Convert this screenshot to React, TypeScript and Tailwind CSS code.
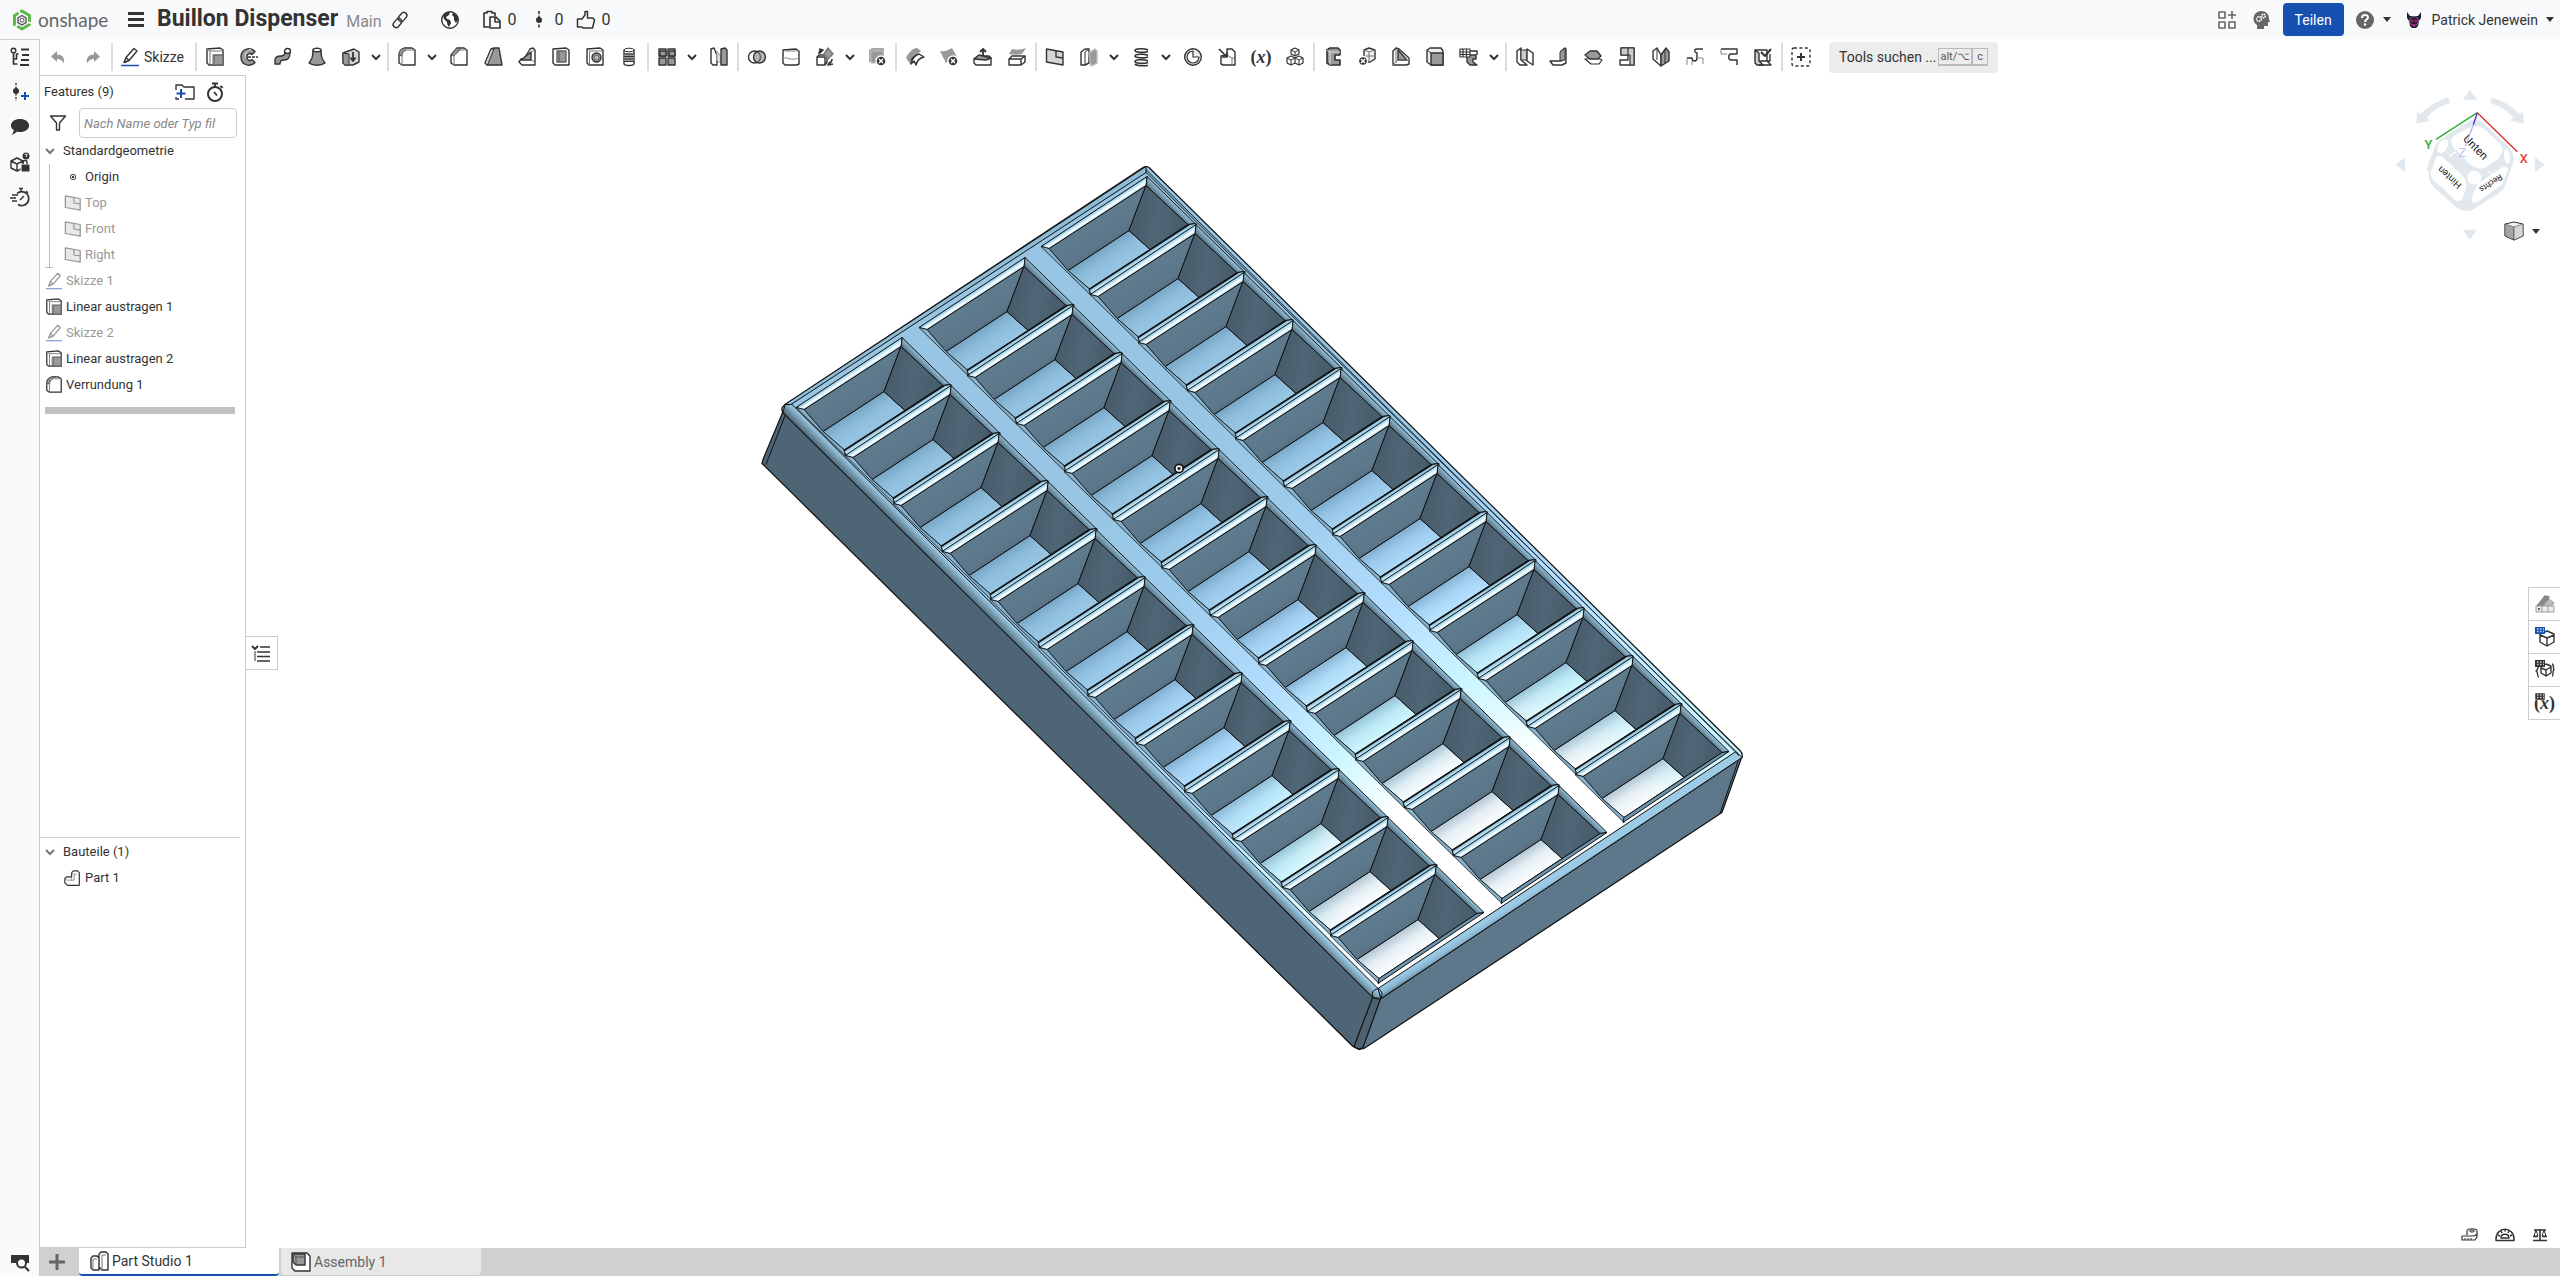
import React, { useState } from "react";

const K = "#333333";
const G = "#999999";
const L = "#d4d4d4";

const icons: Record<string, React.ReactNode> = {
  undo: (
    <path d="M9 4v3.500c5 0 8 3 7 9-1.500-3-3.500-4.500-7-4.500V15L3 9.500z" fill={G} stroke="none" />
  ),
  redo: (
    <path d="M11 4v3.500c-5 0-8 3-7 9 1.500-3 3.500-4.500 7-4.500V15l6-5.500z" fill={G} stroke="none" />
  ),
  sketch: (
    <>
      <path d="M4 15.500l2-5L14 1.500l3 2.500-8 9.500z" fill="#fff" />
      <path d="M6 10.500l3 3M4 15.500l2-1" />
      <path d="M1 18.500h18" stroke="#1651b0" strokeWidth="1.500" />
    </>
  ),
  extrude: (
    <>
      <path d="M2 2l13-1 3 2v15H4l-2-2z" fill="#fff" />
      <path d="M5 18V4h13M2 2l3 2M8 18V7" stroke="#777" strokeWidth="1" />
      <path d="M9 8h9v10H9z" fill={G} stroke="#666" />
    </>
  ),
  revolve: (
    <>
      <path d="M16 4.500C12 0 2 1 2 10s10 10 14 5.500l-3-3c-2 2-5 1-5-2.500s3-4.500 5-2.500z" fill={G} />
      <path d="M12 2.500c-3 0-6 3-6 8" stroke="#ddd" strokeWidth="1" />
      <path d="M9 10h10" strokeDasharray="3 1" />
    </>
  ),
  sweep: (
    <>
      <path d="M2 17v-4c0-3 3-4 6-4 3 0 4-1 4-4l5 0c0 5-1 8-6 8-3 0-4 1-4 4z" fill={G} />
      <ellipse cx="14.500" cy="4" rx="3" ry="2.500" fill="#fff" />
    </>
  ),
  loft: (
    <>
      <path d="M6 3c0 7-1 9-4 13 4 3 12 3 16 0-3-4-4-6-4-13z" fill={G} />
      <ellipse cx="10" cy="3" rx="4" ry="1.800" fill="#fff" />
    </>
  ),
  thicken: (
    <>
      <path d="M2 6l11-4 5 3v10l-6 3H4l-2-2z" fill={L} />
      <path d="M2 6l6 1v11H4l-2-2z" fill={G} strokeWidth="1" />
      <path d="M12 5v8M9.500 10.500L12 14l2.500-3.500" strokeWidth="1.800" />
    </>
  ),
  fillet: (
    <>
      <path d="M2 16V8c0-4 2-6 6-7h7l3 2v15H5z" fill="#fff" />
      <path d="M2 8c0-4 2-6 6-7h4C7 2 5 5 5 9z" fill={G} stroke="#555" strokeWidth="1" />
      <path d="M5 18V9c0-4 3-6 7-6h6" stroke="#777" strokeWidth="1" />
    </>
  ),
  chamfer: (
    <>
      <path d="M2 16V8l6-7h7l3 2v15H5z" fill="#fff" />
      <path d="M2 8l6-7 3 1-6 7z" fill={G} stroke="#555" strokeWidth="1" />
      <path d="M5 18V9l6-6h7" stroke="#777" strokeWidth="1" />
    </>
  ),
  draft: (
    <>
      <path d="M2 16L8 2l3-1h5l3 17H4z" fill={G} />
      <path d="M2 16L8 2l3 0L4.500 18z" fill="#ccc" strokeWidth="1" />
    </>
  ),
  rib: (
    <>
      <path d="M13 2l3-1 2 2v15H5l-3-3 2-3h3z" fill="#fff" />
      <path d="M4 13L14 5v8z" fill={G} />
      <path d="M14 5l4-2M14 13l4 2" stroke="#777" strokeWidth="1" />
    </>
  ),
  shell: (
    <>
      <path d="M2 2l13-1 3 2v15H4l-2-2z" fill="#fff" />
      <path d="M6 4h9v11H6z" fill={G} stroke="#666" />
      <path d="M8 4v11" stroke="#555" strokeWidth="1" />
    </>
  ),
  hole: (
    <>
      <path d="M2 2l13-1 3 2v15H4l-2-2z" fill="#fff" />
      <path d="M4.500 18V4H18" stroke="#777" strokeWidth="1" />
      <circle cx="11.500" cy="10.500" r="4.500" fill={G} />
      <circle cx="11.500" cy="10.500" r="2.500" stroke="#666" strokeWidth="1" fill="#bbb" />
    </>
  ),
  thread: (
    <>
      <path d="M5 3v14c1 2 9 2 10 0V3z" fill="#fff" />
      <path d="M4.500 6h11v8h-11z" fill={G} stroke="none" />
      <path d="M4.500 7h11M4.500 9.500h11M4.500 12h11M4.500 14.500h11" strokeWidth="1" />
      <ellipse cx="10" cy="3" rx="5" ry="1.800" fill="#fff" strokeWidth="1" />
    </>
  ),
  pattern: (
    <>
      <path d="M2 2h7v7H2zM11 2h7v7h-7z" fill="#ddd" />
      <path d="M2 11h7v7H2zM11 11h7v7h-7zM3 4h6v5H3zM12 4h6v5h-6z" fill={G} />
    </>
  ),
  mirror: (
    <>
      <path d="M2 2l3-1 3 7v10H4l-2-2z" fill="#fff" />
      <path d="M8 4l4 6v7l-4-4z" fill="#ddd" stroke="#aaa" strokeWidth="1" />
      <path d="M12 8V2l4-1 2 2v15h-6z" fill={G} />
    </>
  ),
  boolean: (
    <>
      <circle cx="7.500" cy="10" r="6" fill="#fff" />
      <circle cx="12.500" cy="10" r="6" fill="rgba(130,130,130,.6)" />
    </>
  ),
  split: (
    <>
      <path d="M2 3l13-1 3 2v13l-2 1H4l-2-2z" fill="#fff" />
      <path d="M2 12c5-4 6 4 17-2M4 4h14" stroke="#888" strokeWidth="1" />
    </>
  ),
  transform: (
    <>
      <path d="M2 10h8v8H2zM2 10l2-2h8v7l-2 3" fill="#fff" />
      <path d="M13 1l5 6-5 5-4-5z" fill={G} stroke="#777" />
      <path d="M4 7c0-3 1-4 4-4M4 2l4 1-3 3M17 12c0 3-1 4-4 5M18 17l-5 1 2-3" strokeWidth="1.600" />
    </>
  ),
  delete: (
    <>
      <path d="M2 3l3-2h12v9H5v5H2z" fill="#aaa" stroke="none" />
      <path d="M4 4h12v12H4z" fill={G} stroke="#bbb" strokeWidth="1" />
      <circle cx="14" cy="14" r="5" fill={K} stroke="#fff" />
      <path d="M12 12l4 4m0-4l-4 4" stroke="#fff" strokeWidth="1.500" />
    </>
  ),
  moveFace: (
    <>
      <path d="M1 11C3 6 8 1 12 1l4 3-5 4-6 9z" fill={G} stroke="none" />
      <path d="M6 17C7 12 10 8 14 7l5 3c-5 1-7 4-8 8l-2-4z" fill="#fff" />
      <path d="M6 13l4-4" />
    </>
  ),
  deleteFace: (
    <>
      <path d="M1 4c5 1 8-1 12-3l5 9c-4 1-9 3-11 6z" fill={G} stroke="none" />
      <circle cx="14" cy="14" r="5" fill={K} stroke="#fff" />
      <path d="M12 12l4 4m0-4l-4 4" stroke="#fff" strokeWidth="1.500" />
    </>
  ),
  faceUp: (
    <>
      <path d="M1 12l4-3h11l2 2v7H3l-2-2z" fill="#fff" />
      <path d="M1 12l5-4 12 3-5 2z" fill={G} />
      <path d="M10 9V2M7 5l3-3 3 3" strokeWidth="1.800" />
    </>
  ),
  replaceFace: (
    <>
      <path d="M2 12l3-3h13v6l-4 3H2z" fill="#fff" />
      <path d="M2 12h12v6M14 12l4-3" />
      <path d="M2 7l3-5c4 1 9 1 14-1l-4 6c-4 1-8 1-13 0z" fill={G} stroke="none" />
    </>
  ),
  plane: (
    <>
      <path d="M1.500 2L18 5v13L1.500 15z" fill={L} />
      <path d="M11 4v6l7 1" />
    </>
  ),
  midPlane: (
    <>
      <path d="M2 5l4-3h4v14l-4 2H2z" fill="#fff" />
      <path d="M6 18V5l4-3" strokeWidth="1" />
      <path d="M10 6l6-4 2 2v12l-6 3z" fill={G} stroke="#bbb" />
    </>
  ),
  helix: (
    <path
      d="M17 3C13 1 4 1.500 4 3.500s9 2.500 13 1M17 8.500C13 6.500 4 7 4 9s9 2.500 13 1M17 14c-4-2-13-1.500-13 .500s9 2.500 13 1M17 18.500c-6 .500-12 0-13-1.500"
      strokeWidth="1.600"
    />
  ),
  compositeCurve: (
    <>
      <circle cx="10" cy="10" r="8.300" fill="#eee" />
      <path d="M10 4v6h6a6 6 0 1 1-6-6z" fill="#fff" strokeWidth="1.200" />
    </>
  ),
  derive: (
    <>
      <path d="M4 9v8l2 1h12V5l-3-3h-5v6z" fill="#fff" />
      <path d="M10 8l5 3h3M15 11v7" stroke="#777" strokeWidth="1" />
      <path d="M2 2l8 8M10 5v5H5" strokeWidth="1.700" />
    </>
  ),
  blocks: (
    <>
      <path d="M10 1l4 2v4l-4 2-4-2V3zM6 9l4 2v5l-4 2-4-2v-5zM14 9l4 2v5l-4 2-4-2v-5z" fill="#fff" strokeWidth="1.200" />
      <path d="M6 3l4 2 4-2M10 5v4M2 11l4 2 4-2 4 2 4-2M6 13v5M14 13v5" strokeWidth="1" />
    </>
  ),
  sheetMetal: (
    <>
      <path d="M4 3l3-2h8l2 2v5h-5v5h5v5H7l-3-2z" fill={G} strokeWidth="1.600" />
      <path d="M4 3l3 2v13M7 5h10" stroke="#ddd" strokeWidth="1" />
    </>
  ),
  deletePart: (
    <>
      <path d="M7 3l5-2 6 2v9l-5 3H7z" fill="#eee" />
      <path d="M7 3l5 2v10M12 5l6-2M9 9h9" stroke="#777" strokeWidth="1" />
      <circle cx="6" cy="14" r="4.500" fill={K} stroke="#fff" />
      <path d="M4 12l4 4m0-4l-4 4" stroke="#fff" strokeWidth="1.500" />
    </>
  ),
  flange: (
    <>
      <path d="M2 4l3-3 3 1 10 9v6l-3 1H2z" fill="#fff" />
      <path d="M7 3l9 10H7z" fill={G} />
      <path d="M7 13l-5 5M5 2v14M7 13h11" stroke="#777" strokeWidth="1" />
    </>
  ),
  solid: (
    <>
      <path d="M2 3l3-2h11l2 3v14H6l-4-3z" fill="#eee" />
      <path d="M6 6h12v12H6z" fill={G} />
      <path d="M2 3l4 3" strokeWidth="1" />
    </>
  ),
  table: (
    <>
      <path d="M8 8h9v4h-3v3l4 3h-7l-3-3z" fill={G} />
      <path d="M1 2h10v8H1zM4 2v8M7.500 2v8M1 5h10M1 7.500h10" fill="#fff" strokeWidth="1.200" />
      <path d="M11 4h7v4" />
    </>
  ),
  bend: (
    <>
      <path d="M2 4l4-3v12l6 5H5l-3-3z" fill="#fff" />
      <path d="M6 3h6v10H6z" fill="#ccc" strokeWidth="1" />
      <path d="M12 2l6 4v12l-6-4z" fill="#fff" />
    </>
  ),
  tab: (
    <>
      <path d="M12 4l4-3 1 1v14l-4 2H4l-3-4h11z" fill="#fff" />
      <path d="M11 5l5-4v12l-5 1z" fill={G} strokeWidth="1" />
    </>
  ),
  hem: (
    <>
      <path d="M2 12l6 5h8l3-4-5-2z" fill="#fff" strokeWidth="1.200" />
      <path d="M2 8l5-4h7l4 5-3 3H7z" fill={G} />
    </>
  ),
  joint: (
    <>
      <path d="M4 1h13v17H3v-5h8V8H4z" fill="#fff" />
      <path d="M4 1h7v7H4zM11 1h6v17h-4V8h-2z" fill="#ccc" strokeWidth="1.200" />
    </>
  ),
  corner: (
    <>
      <path d="M2 4l4-3 4 7v11l-8-7z" fill="#fff" />
      <path d="M10 8l5-7 3 4v9l-8 5z" fill={G} />
      <path d="M6 2v11M14 3v13" strokeWidth="1" />
    </>
  ),
  relief: (
    <>
      <path d="M2 11h5c0 4 5 4 5 0V6c-3-1-3-4 0-4h6" />
      <path d="M12 11h6v6M2 11v7M7 14v4" stroke="#888" strokeWidth="1" />
    </>
  ),
  modify: (
    <>
      <path d="M2 2h16v5h-6c-3 0-3 6 0 6h6v5" />
      <path d="M2 2v5h6" stroke="#888" strokeWidth="1" />
    </>
  ),
  finish: (
    <>
      <path d="M2 3l4 3v8l4 4H4l-2-2z" fill="#ccc" />
      <path d="M2 3h12v11l4 4H6M6 14h11V7" fill="none" />
      <path d="M8 5l4 4 6-7" strokeWidth="2" />
    </>
  ),
  addTool: (
    <>
      <rect x="1" y="1" width="18" height="18" rx="2" strokeDasharray="3 2.400" />
      <path d="M10 6v8M6 10h8" strokeWidth="2" />
    </>
  ),
  tree: (
    <>
      <circle cx="3.500" cy="3.500" r="2.300" />
      <path d="M3.500 6v11h4M3.500 12h3V7h2" strokeWidth="1.700" />
      <path d="M11 2.500h8M12 8h7M11 13h8M10 18h9" strokeWidth="2" />
    </>
  ),
  addVersion: (
    <>
      <circle cx="6" cy="9" r="3" fill={K} stroke="none" />
      <path d="M6 1v18" strokeDasharray="2 1.500" />
      <path d="M15 10v8M11 14h8" stroke="#1651b0" strokeWidth="2" />
    </>
  ),
  comment: (
    <path d="M10 2c5 0 9 2.500 9 6.500S15 15 10 15c-1 0-2 0-2.500-.500L2 18l2-5c-2-1-3-2.500-3-4.500C1 4.500 5 2 10 2z" fill={K} stroke="none" />
  ),
  insight: (
    <>
      <path d="M7 6l6 3v7l-6 3-6-3V9zM1 9l6 3 6-3M7 12v7" />
      <circle cx="16" cy="4" r="3.500" fill={K} stroke="none" />
      <path d="M15 3c0-1.500 2-1.500 2 0 0 1-1 1-1 2" stroke="#fff" strokeWidth="1" />
      <rect x="11" y="12" width="9" height="8" fill={K} stroke="#fff" strokeWidth="1" />
      <path d="M13 12v-2c0-2 4-2 4 0v2" />
    </>
  ),
  history: (
    <>
      <path d="M7 6.500A7 7 0 1 1 8 17.500" strokeWidth="1.700" />
      <path d="M9 1.500h4M11 2v3M10 13l4-4M2 8h6M0 11h6M2 14h5M16 4l2 2" />
    </>
  ),
  stopwatch: (
    <>
      <circle cx="10" cy="12" r="7" strokeWidth="2" />
      <path d="M7 1.500h6M10 2v3M15.500 4l2 2M9 10l3 3.500" strokeWidth="1.800" />
    </>
  ),
  addFolder: (
    <>
      <path d="M1 8V3h6l2 2h10v12h-9M1 15v2h3" />
      <path d="M6 7v9M1.500 11.500h9" stroke="#1651b0" strokeWidth="2" />
    </>
  ),
  filter: <path d="M2.500 3h15l-6 7v7h-3v-7z" />,
  part: (
    <>
      <path d="M1 10l2-2h6V3l2-2h5l2 2v15H4l-3-3z" fill="#fff" />
      <path d="M1 10l3 2h8V5h3M9 3l3 2M9 8v4" stroke="#888" strokeWidth="1" />
    </>
  ),
  studio: (
    <>
      <path d="M2 7l2-2h4l2 2v12H4l-2-2zM10 3l2-2h5l2 2v16h-6l-3-3z" fill="#fff" />
      <path d="M4 19V8h4M13 19V4h4" stroke="#777" strokeWidth="1" />
    </>
  ),
  assembly: (
    <>
      <path d="M1 1h15l3 3v15H4l-3-3z" fill="#fff" />
      <path d="M2 2h12v11H5l-3-3z" fill={G} />
      <path d="M2 2l3 3v8M5 5h9" stroke="#555" strokeWidth="1" />
    </>
  ),
  searchTab: (
    <>
      <path d="M1 3h18v8h-2a6 6 0 0 0-11 0H1z" fill={K} stroke="none" />
      <circle cx="11.500" cy="11" r="4.500" fill="#fff" strokeWidth="2" />
      <path d="M15 15l4 4" strokeWidth="2.200" />
    </>
  ),
  origin: (
    <>
      <circle cx="10" cy="10" r="3" strokeWidth="1" />
      <circle cx="10" cy="10" r="1.300" fill={K} stroke="none" />
    </>
  ),
  link: (
    <g transform="rotate(-50 10 10)" strokeWidth="1.400">
      <rect x="1" y="7" width="10" height="6" rx="3" />
      <rect x="9" y="7" width="10" height="6" rx="3" />
    </g>
  ),
  globe: (
    <>
      <circle cx="10" cy="10" r="8.300" fill="#fff" />
      <path d="M3 5c2-3 5-3 7-3l-1 3-3 2 1 2 3 1 1 3-2 4c-1-1-2-3-2-5L4 9zM13 3c3 1 5 4 5 7l-2 3-2-3 0-3-2-2z" fill={K} stroke="none" />
    </>
  ),
  copy: (
    <>
      <path d="M7 17H2V3h3V1.500h5V3h3v3" strokeWidth="1.600" />
      <path d="M8 7h6l4 4v7H8zM13 7v5h5" strokeWidth="1.600" />
    </>
  ),
  versions: (
    <>
      <circle cx="10" cy="10" r="3" fill={K} stroke="none" />
      <path d="M10 1v18" strokeDasharray="3 1.500" strokeWidth="1.600" />
    </>
  ),
  like: <path d="M1.500 9H6l3-4V1.500h2.500V8H17l1.500 2-2 8H7l-1-1H1.500z" strokeWidth="1.500" />,
  apps: (
    <path d="M2 2h6v6H2zM2 12h6v6H2zM12 12h6v6h-6zM15 1v8M11 5h8" stroke="#666" strokeWidth="1.600" />
  ),
  learning: (
    <>
      <path d="M6 19v-4C1 12 1 2 10 1c6 0 8 4 8 8l1 3h-2v4h-4v3z" fill="#666" stroke="none" />
      <circle cx="8" cy="9" r="2.300" stroke="#fff" strokeDasharray="1.500 .500" />
      <circle cx="12.500" cy="6" r="1.800" stroke="#fff" strokeDasharray="1.500 .500" />
    </>
  ),
  help: (
    <>
      <circle cx="10" cy="10" r="9" fill="#666" stroke="none" />
      <path d="M7 8c0-4 6-4 6-.500 0 2-3 2-3 4.500" stroke="#fff" strokeWidth="2" />
      <circle cx="10" cy="14.500" r="1.300" fill="#fff" stroke="none" />
    </>
  ),
  avatar: (
    <>
      <path d="M3 2l3 4h8l3-4v6l-2 3-1 5-2 2H8l-2-2-1-5-2-3z" fill="#2a1a33" stroke="none" />
      <circle cx="10" cy="11" r="4.500" stroke="#7a6a85" strokeWidth="1" />
      <circle cx="8" cy="11" r="1.500" fill="#b0127e" stroke="none" />
      <circle cx="12" cy="11" r="1.500" fill="#b0127e" stroke="none" />
      <path d="M8 15l2-1 2 1-2 2z" fill="#d21c98" stroke="none" />
    </>
  ),
  shadedCube: (
    <>
      <path d="M1 3l9-2 9 2v12l-9 4-9-4z" fill="#f2f2f2" strokeWidth="1" />
      <path d="M1 3l9 3v13l-9-4z" fill="#a5a5a5" strokeWidth=".500" />
      <path d="M10 6l9-3v12l-9 4z" fill={L} strokeWidth=".500" />
    </>
  ),
  appearance: (
    <>
      <path d="M2 12L10 2l4 1-7 11z" fill="#888" stroke="#888" />
      <path d="M7 13l7-8 5 4-6 7z" fill="#bbb" stroke={G} strokeWidth="1" />
      <path d="M1 12h18v6H1zM7 12v6M13 12v6" fill="#eee" stroke={G} strokeWidth="1" />
      <circle cx="4" cy="15" r="1" fill={K} stroke="none" />
    </>
  ),
  configTable: (
    <>
      <path d="M12 4l7 3v8l-7 4-7-4V7zM5 8l7 3 7-3M12 11v8" fill="#fff" />
      <path d="M0 0h10v7H0z" fill="#1651b0" stroke="none" />
      <path d="M2 2h1.500M5 2h1.500M8 2h1M2 4.500h1.500M5 4.500h1.500M8 4.500h1" stroke="#bcd6ff" />
    </>
  ),
  propertyTable: (
    <>
      <path d="M11 4l5 2v7l-5 3-5-3V7zM6 8l5 2 5-3M11 10v6" fill="#fff" />
      <path d="M4 7c-2 0-1 4-3 4 2 0 1 6 3 6M17 4c2 0 1 5 2 6-2 0 0 6-2 6" />
      <path d="M0 0h10v7H0z" fill={K} stroke="none" />
      <path d="M2 2h1.500M5 2h1.500M8 2h1M2 4.500h1.500M5 4.500h1.500M8 4.500h1" stroke="#ccc" />
    </>
  ),
  cornerTable: (
    <>
      <path d="M0 0h10v7H0z" fill={K} stroke="#fff" strokeWidth=".500" />
      <path d="M2 2h1.500M5 2h1.500M8 2h1M2 4.500h1.500M5 4.500h1.500M8 4.500h1" stroke="#ccc" />
    </>
  ),
  tape: (
    <>
      <path d="M7 11V7c0-3 10-3 10 0v6l-2 3H2v-4h10c3 0 5-1 5-3" fill="#fff" strokeWidth="1.200" />
      <ellipse cx="12" cy="7" rx="2.500" ry="1" strokeWidth="1" />
      <path d="M5 16v-2M8 16v-2M11 16v-2" strokeWidth="1" />
    </>
  ),
  protractor: (
    <>
      <path d="M1 15C1 2 19 2 19 15v1.500H1z" fill="#fff" strokeWidth="1.500" />
      <path d="M6 14c0-5 8-5 8 0zM3 11l2 1M6 7l1 2M10 5.500v2M14 7l-1 2M17 11l-2 1" />
    </>
  ),
  scale: (
    <>
      <path d="M4 6h12M10 5v12M3 16.500h14" strokeWidth="1.600" />
      <path d="M6 6l-2 6h4zM14 6l-2 6h4z" strokeWidth="1" />
      <path d="M3 12.500h5M12 12.500h5" strokeWidth="1.600" />
    </>
  ),
  featureList: (
    <>
      <path d="M1 3l3 3 3-3" strokeWidth="2" />
      <path d="M4 8v10" stroke={G} strokeWidth="2" />
      <path d="M9 4h10M6 9h13M6 13.500h13M6 18h13" strokeWidth="1.300" />
    </>
  ),
};

interface IconProps {
  name: string;
  className?: string;
}

const Icon: React.FC<IconProps> = ({ name, className = "size-5" }) => (
  <svg
    viewBox="0 0 20 20"
    className={`shrink-0 ${className}`}
    fill="none"
    stroke={K}
    strokeWidth="1.400"
    strokeLinejoin="round"
    aria-hidden="true"
  >
    {icons[name]}
  </svg>
);

const Caret = () => (
  <svg viewBox="0 0 8 5" className="h-[5px] w-2 shrink-0" aria-hidden="true">
    <path d="M0 0h8L4 5z" fill={K} />
  </svg>
);

const Chevron: React.FC<{ color?: string }> = ({ color = K }) => (
  <svg viewBox="0 0 10 7" className="h-[7px] w-2.5 shrink-0" aria-hidden="true">
    <path d="M1 1l4 4 4-4" fill="none" stroke={color} strokeWidth="2" />
  </svg>
);

// "v" is a drop-down arrow, "|" a group separator
const tools =
  "extrude revolve sweep loft thicken v | fillet v chamfer draft rib shell hole thread | pattern v mirror | boolean split transform v delete | moveFace deleteFace faceUp replaceFace | plane midPlane v helix v compositeCurve derive variable blocks | sheetMetal deletePart flange solid table v | bend tab hem joint corner relief modify finish | addTool".split(
    " ",
  );

const Separator = () => (
  <span className="flex w-1 shrink-0 justify-center self-stretch py-1">
    <span className="w-0.5 bg-[#dcdcdc]" />
  </span>
);

const Toolbar = () => (
  <div className="flex h-9 items-center bg-white" role="toolbar">
    <button aria-label="Rückgängig" className="flex w-[35px] justify-center">
      <Icon name="undo" />
    </button>
    <button aria-label="Wiederholen" className="flex w-[35px] justify-center">
      <Icon name="redo" />
    </button>
    <Separator />
    <button className="flex w-20 shrink-0 items-center gap-1 pl-1.5 text-sm text-[#333]">
      <Icon name="sketch" />
      Skizze
    </button>
    <Separator />
    {tools.map((tool, index) => {
      if (tool === "|") return <Separator key={index} />;
      if (tool === "v")
        return (
          <button key={index} aria-label="Mehr" className="flex w-[18px] shrink-0 pl-[3px]">
            <Chevron />
          </button>
        );
      return (
        <button key={index} aria-label={tool} className="flex w-[34px] shrink-0 justify-center">
          {tool === "variable" ? (
            <span className="font-['Liberation_Serif',serif] text-lg leading-5 font-bold text-[#333]">
              (<i>x</i>)
            </span>
          ) : (
            <Icon name={tool} />
          )}
        </button>
      );
    })}
    <button className="ml-[11px] flex h-[31px] items-center gap-0.5 rounded bg-[#ececec] px-2.5 text-sm whitespace-nowrap text-[#333]">
      Tools suchen ...
      <span className="flex text-[11px] text-[#555]">
        <kbd className="flex h-[18px] items-center border border-b-2 border-[#bbb] px-px font-[Roboto,sans-serif]">
          alt/⌥
        </kbd>
        <kbd className="flex h-[18px] items-center border border-b-2 border-[#bbb] px-1 font-[Roboto,sans-serif]">
          c
        </kbd>
      </span>
    </button>
  </div>
);

const Header = () => (
  <header className="flex h-[39px] shrink-0 items-center bg-[#f8f9fb] text-base text-[#333]">
    <a href="#" className="flex w-[116px] items-center gap-1.5 pl-3">
      <svg viewBox="0 0 20 22" className="h-[22px] w-5" fill="none" aria-hidden="true">
        <path d="M10 2l7.500 4.500v9L10 20l-7.500-4.500v-9z" stroke="#5cb84a" strokeWidth="3" strokeDasharray="15 2" />
        <path d="M10 6.500l4 2.500v4.500L10 16l-4-2.500V9z" stroke="#555" strokeWidth="1.400" />
        <circle cx="10" cy="11.200" r="2" stroke="#555" strokeWidth="1" />
      </svg>
      <span className="font-[Lato,sans-serif] text-[19px] leading-6 text-[#666]">onshape</span>
    </a>
    <button aria-label="Menü" className="ml-3 flex w-4 flex-col gap-[3px]">
      <span className="h-[3px] bg-[#333]" />
      <span className="h-[3px] bg-[#333]" />
      <span className="h-[3px] bg-[#333]" />
    </button>
    <h1 className="ml-[13px] text-[23px] font-bold whitespace-nowrap">Buillon Dispenser</h1>
    <span className="mt-1 ml-2 text-[#8a8a8a]">Main</span>
    <button aria-label="Link" className="ml-2">
      <Icon name="link" />
    </button>
    <Icon name="globe" className="ml-[30px] size-5" />
    <span className="ml-[22px] flex items-center gap-1.5">
      <Icon name="copy" />0
    </span>
    <span className="ml-3 flex items-center gap-1.5">
      <Icon name="versions" />0
    </span>
    <span className="ml-3 flex items-center gap-1.5">
      <Icon name="like" />0
    </span>
    <div className="ml-auto flex items-center pr-1.5 text-sm">
      <button aria-label="Apps">
        <Icon name="apps" />
      </button>
      <button aria-label="Lernen" className="ml-3.5">
        <Icon name="learning" />
      </button>
      <button className="ml-3 h-[33px] w-[61px] rounded bg-[#1651b0] text-sm text-white">
        Teilen
      </button>
      <button aria-label="Hilfe" className="ml-[11px] flex items-center gap-2">
        <Icon name="help" />
        <Caret />
      </button>
      <button className="ml-[13px] flex items-center gap-2 whitespace-nowrap">
        <Icon name="avatar" />
        Patrick Jenewein
        <Caret />
      </button>
    </div>
  </header>
);

const SideRail = () => (
  <nav className="flex w-10 shrink-0 flex-col items-center gap-[15px] border-t border-r border-[#ccc] bg-[#fafafa] pt-[7px] pb-1">
    {["tree", "addVersion", "comment", "insight", "history"].map((name) => (
      <button key={name} aria-label={name}>
        <Icon name={name} />
      </button>
    ))}
    <button aria-label="Tabs suchen" className="mt-auto">
      <Icon name="searchTab" />
    </button>
  </nav>
);

const features = [
  { icon: "sketch", label: "Skizze 1", hidden: true },
  { icon: "extrude", label: "Linear austragen 1", hidden: false },
  { icon: "sketch", label: "Skizze 2", hidden: true },
  { icon: "extrude", label: "Linear austragen 2", hidden: false },
  { icon: "fillet", label: "Verrundung 1", hidden: false },
];

const FeaturePanel = () => {
  const [query, setQuery] = useState<string>("");

  return (
    <aside className="flex w-[206px] shrink-0 flex-col border-t border-r border-b border-[#ccc] bg-white text-[13px] text-[#333]">
      <div className="flex h-8 items-center pr-5 pl-1">
        <h2 className="mr-auto">Features (9)</h2>
        <button aria-label="Ordner hinzufügen">
          <Icon name="addFolder" />
        </button>
        <button aria-label="Zeiten" className="ml-2.5">
          <Icon name="stopwatch" />
        </button>
      </div>
      <div className="flex items-center pr-2 pl-2">
        <Icon name="filter" className="mr-[11px] size-5" />
        <input
          aria-label="Features filtern"
          value={query}
          onChange={(e) => setQuery(e.target.value)}
          placeholder="Nach Name oder Typ filtern"
          className="h-[30px] w-0 grow rounded-sm border border-[#ccc] pr-5 pl-1 italic placeholder:text-[#888]"
        />
      </div>
      <button className="flex h-[26px] items-center gap-2 pl-[5px]">
        <Chevron color="#777" />
        Standardgeometrie
      </button>
      <ul className="ml-[9px] border-l border-[#bbb]">
        <li className="flex h-[26px] items-center gap-[3px] pl-3.5">
          <Icon name="origin" className="size-[18px]" />
          Origin
        </li>
        {["Top", "Front", "Right"].map((label) => (
          <li key={label} className="flex h-[26px] items-center gap-[3px] pl-3.5 text-[#999]">
            <Icon name="plane" className="size-[18px] opacity-50" />
            {label}
          </li>
        ))}
      </ul>
      <span className="-mt-px ml-[5px] h-px w-2 bg-[#bbb]" />
      <ul>
        {features.map(({ icon, label, hidden }) => (
          <li
            key={label}
            className={`flex h-[26px] items-center gap-[3px] pl-[5px] ${hidden ? "text-[#999]" : ""}`}
          >
            <Icon name={icon} className={hidden ? "size-[18px] opacity-50" : "size-[18px]"} />
            {label}
          </li>
        ))}
      </ul>
      <span className="mt-[9px] mr-2.5 ml-[5px] h-[7px] bg-[#c2c2c2]" />
      <div className="mt-auto mr-[5px] h-[410px] border-t border-[#ccc]">
        <button className="flex h-7 items-center gap-2 pl-[5px]">
          <Chevron color="#777" />
          Bauteile (1)
        </button>
        <div className="flex h-6 items-center gap-1 pl-6">
          <Icon name="part" className="size-[17px]" />
          Part 1
        </div>
      </div>
    </aside>
  );
};

// Grid of pockets: 3 columns, 12 rows, in an isometric view
const ROWS = 12;
const pockets = [0, 1, 2].flatMap((col) =>
  Array.from({ length: ROWS }, (_, row) => ({
    col,
    row,
    x: Math.round(1147 - col * 122.5 + row * 48.55),
    y: Math.round(176 + col * 80.5 + row * 48),
  })),
);

const Pocket: React.FC<{ last: boolean }> = ({ last }) => (
  <g stroke="#111" strokeWidth="1" strokeLinejoin="round">
    <path d="M-18 54L3 73L-57 113L-79 94Z" fill="url(#floorShade)" />
    <path d="M-1 9L-18 54L-79 94L-98 72Z" fill="url(#backWall)" />
    <path d="M-1 9L41 48L3 73L-18 54Z" fill="url(#sideWall)" />
    <path d="M0 0L48 47L41 48L-1 9Z" fill="url(#sideFillet)" />
    <path d="M0 0L-1 9L-98 72L-106 70Z" fill="url(#backFillet)" />
    <path d="M-106 70L-98 72L-79 94L-57 113L-57 118Z" fill="#86b2cd" strokeWidth=".800" />
    {last ? (
      <path d="M48 47L41 48L-57 113L-58 118Z" fill="#6d95af" />
    ) : (
      <>
        <path d="M42 48L49 47L49 57L-50 120L-56 118L-58 113Z" fill="url(#bar)" />
        <path d="M42 48L-58 113" strokeWidth="1.600" />
      </>
    )}
  </g>
);

const Model = () => (
  <svg
    viewBox="246 75 2314 1172"
    className="h-full w-full"
    fill="none"
    role="img"
    aria-label="Part 1"
  >
    <defs>
      <radialGradient id="top" gradientUnits="userSpaceOnUse" cx="1530" cy="940" r="620">
        <stop offset=".300" stopColor="#ffffff" />
        <stop offset=".420" stopColor="#cdf8ff" />
        <stop offset=".580" stopColor="#b3ddff" />
        <stop offset=".800" stopColor="#9dcbec" />
        <stop offset="1" stopColor="#97c5e3" />
      </radialGradient>
      <linearGradient id="floorShade" gradientUnits="userSpaceOnUse" x1="-48" y1="74" x2="-27" y2="106">
        <stop offset="0" stopColor="#4a7898" stopOpacity=".420" />
        <stop offset=".300" stopColor="#5a90b4" stopOpacity=".160" />
        <stop offset=".700" stopColor="#80c0d0" stopOpacity=".040" />
        <stop offset="1" stopColor="#80c0d0" stopOpacity="0" />
      </linearGradient>
      <linearGradient id="backWall" gradientUnits="userSpaceOnUse" x1="-60" y1="47" x2="-38" y2="80">
        <stop offset="0" stopColor="#5f7b8e" />
        <stop offset=".600" stopColor="#5c778a" />
        <stop offset="1" stopColor="#4d6474" />
      </linearGradient>
      <linearGradient id="sideWall" gradientUnits="userSpaceOnUse" x1="-18" y1="40" x2="40" y2="50">
        <stop offset="0" stopColor="#475b69" />
        <stop offset=".500" stopColor="#4f6676" />
        <stop offset="1" stopColor="#475b69" />
      </linearGradient>
      <linearGradient id="sideFillet" gradientUnits="userSpaceOnUse" x1="0" y1="0" x2="-5" y2="5">
        <stop offset="0" stopColor="#8fbdd8" />
        <stop offset="1" stopColor="#546c7c" />
      </linearGradient>
      <linearGradient id="backFillet" gradientUnits="userSpaceOnUse" x1="0" y1="0" x2="3.900" y2="5.900">
        <stop offset="0" stopColor="#8fc0da" />
        <stop offset=".350" stopColor="#c8ecfb" />
        <stop offset=".600" stopColor="#ffffff" />
        <stop offset="1" stopColor="#a5d0e6" />
      </linearGradient>
      <linearGradient id="bar" gradientUnits="userSpaceOnUse" x1="34.200" y1="53.200" x2="40.100" y2="62.400">
        <stop offset="0" stopColor="#84b2cc" />
        <stop offset=".280" stopColor="#a5d6f0" />
        <stop offset=".500" stopColor="#ffffff" />
        <stop offset=".640" stopColor="#cdeefd" />
        <stop offset=".820" stopColor="#93c3de" />
        <stop offset="1" stopColor="#7096ae" />
      </linearGradient>
      <linearGradient id="leftRim" gradientUnits="userSpaceOnUse" x1="1080" y1="693" x2="1073" y2="700">
        <stop offset="0" stopColor="#9ac8e4" />
        <stop offset="1" stopColor="#55707f" />
      </linearGradient>
      <linearGradient id="frontRim" gradientUnits="userSpaceOnUse" x1="1378" y1="988" x2="1383" y2="996">
        <stop offset="0" stopColor="#9ccbe6" />
        <stop offset=".600" stopColor="#89b6d1" />
        <stop offset="1" stopColor="#67899d" />
      </linearGradient>
    </defs>
    <g stroke="#111" strokeLinejoin="round" strokeWidth="1.200">
      <path d="M783 411L763 459L762 463L1353 1046L1359 1049L1377 994Z" fill="#4e6575" />
      <path d="M1377 994L1359 1049L1364 1048L1722 812L1742 756Z" fill="#5d788b" />
      <path d="M1373 996L1354 1046Q1358 1050 1363 1047L1381 997Z" fill="#4c6270" />
      <path d="M787 410L766 464M1738 761L1720 813" strokeWidth="1" />
      <path
        d="M1143 167Q1146 165 1149 167L1740 750Q1743 753 1742 757L1381 998Q1377 999 1373 997L783 412Q780 408 785 404Z"
        fill="url(#top)"
      />
      <path d="M785 404L792 404L1378 988L1381 998L1373 997L783 412Z" fill="url(#leftRim)" strokeWidth="1" />
      <path d="M1378 988L1736 751L1742 757L1381 998Z" fill="url(#frontRim)" strokeWidth="1" />
      <path d="M1146 169L1739 755L1736 751L1146 172Z" fill="#7ba5be" strokeWidth=".800" />
      <path d="M1146 166L1146 172L791 404L785 404Z" fill="#8ebcd6" strokeWidth="1" />
      <path d="M1373 997Q1370 990 1378 988Q1384 991 1381 998" strokeWidth="1" />
    </g>
    {pockets.map(({ col, row, x, y }) => (
      <g key={`${col}-${row}`} transform={`translate(${x} ${y})`}>
        <Pocket last={row === ROWS - 1} />
      </g>
    ))}
    <circle cx="1179" cy="468" r="3.500" fill="#333" stroke="#111" strokeWidth="3" />
    <circle cx="1179" cy="468" r="2.500" fill="#333" stroke="#fff" strokeWidth="1.500" />
  </svg>
);

const ViewCube = () => (
  <svg
    viewBox="645 265 450 456"
    className="absolute top-[13px] right-[15px] h-[152px] w-[150px]"
    fontFamily="Roboto, sans-serif"
    role="img"
    aria-label="Ansichtswürfel"
  >
    <g fill="#e1e8ee">
      <path d="M848 300h43l-21-30zM848 690h43l-21 30zM675 473v44l-29-22zM1065 473v44l29-22z" />
      <path d="M805 293l5 17q-42 13-70 43l10 10-41 9 2-36 10 8q34-36 84-51zM935 293l-5 17q42 13 70 43l-10 10 41 9-2-36-10 8q-34-36-84-51z" />
      <path d="M885 358q10 0 20 8l78 72q20 20 18 45l-25 75q-6 14-18 22l-75 47q-28 14-52-2l-72-65q-16-18-12-42l-8-8 26-70q4-10 14-18l88-58q8-5 18-6z" />
    </g>
    <g fill="#fff">
      <path d="M890 380q12-2 22 7l45 42q14 14 8 30l-10 18-38 26q-12 8-26 2-14-4-24-14l-48-50q-8-10-4-22 4-8 12-14l42-22q10-5 21-3z" />
      <path d="M770 470q8-6 20 4l58 54q10 12 12 28l-12 40q-8 14-22 6l-66-62q-10-12-8-24z" />
      <path d="M905 545l58-40q20-10 22 4l-18 44-60 44q-14 12-28 12-6-6-2-20l12-30q6-10 16-14z" />
      <circle cx="883" cy="534" r="21" />
      <ellipse cx="788" cy="440" rx="14" ry="22" transform="rotate(32 788 440)" />
      <ellipse cx="981" cy="470" rx="9" ry="22" transform="rotate(-8 981 470)" />
    </g>
    <path d="M808 470l20-14M925 515l18 14" stroke="#fff" strokeWidth="4" />
    <g fill="#222" textAnchor="middle">
      <text transform="translate(879 451) rotate(45)" fontSize="34">
        Unten
      </text>
      <text transform="translate(815 526) rotate(222)" fontSize="29">
        Hinten
      </text>
      <text transform="translate(928 544) rotate(147)" fontSize="25">
        Rechts
      </text>
    </g>
    <g strokeWidth="4" fill="none">
      <path d="M892 339L768 419" stroke="#2fae2f" />
      <path d="M892 339L1012 456" stroke="#d92b2b" />
      <path d="M892 339L880 375" stroke="#3a3acb" />
      <path d="M880 375L856 440" stroke="#b3b3f2" />
    </g>
    <g fontSize="38" textAnchor="middle" fontWeight="500">
      <text x="745" y="448" fill="#2fae2f">
        Y
      </text>
      <text x="1031" y="490" fill="#e04848">
        X
      </text>
      <text x="847" y="472" fill="#c3c3f5" fontWeight="400">
        Z
      </text>
    </g>
  </svg>
);

const Canvas = () => (
  <main className="relative min-w-0 grow overflow-hidden bg-white">
    <div className="absolute inset-0">
      <Model />
    </div>
    <button
      aria-label="Feature-Liste"
      className="absolute top-[561px] -left-px flex h-[34px] w-[33px] items-center justify-center border border-l-0 border-[#ccc] bg-white"
    >
      <Icon name="featureList" />
    </button>
    <ViewCube />
    <button aria-label="Darstellung" className="absolute top-[146px] right-5 flex items-center gap-2">
      <Icon name="shadedCube" />
      <Caret />
    </button>
    <div className="absolute top-[512px] right-0 w-8 border-t border-l border-[#ccc]">
      {["appearance", "configTable", "propertyTable"].map((name) => (
        <button
          key={name}
          aria-label={name}
          className="flex h-[33px] w-full items-center justify-center border-b border-[#ccc] bg-white"
        >
          <Icon name={name} />
        </button>
      ))}
      <button
        aria-label="Variablentabelle"
        className="relative flex h-[33px] w-full items-center justify-center border-b border-[#ccc] bg-white font-['Liberation_Serif',serif] text-lg leading-5 font-bold text-[#333]"
      >
        (<i>x</i>)
        <Icon name="cornerTable" className="absolute top-1.5 left-1.5 size-5" />
      </button>
    </div>
    <div className="absolute right-2.5 bottom-1 flex gap-[15px]">
      {["tape", "protractor", "scale"].map((name) => (
        <button key={name} aria-label={name}>
          <Icon name={name} />
        </button>
      ))}
    </div>
  </main>
);

const TabBar = () => (
  <footer className="flex h-7 shrink-0 bg-[#d0d0d0] text-sm">
    <button
      aria-label="Tab hinzufügen"
      className="flex w-[39px] items-center justify-center pr-1.5"
    >
      <svg viewBox="0 0 16 16" className="size-4" aria-hidden="true">
        <path d="M8 0v16M0 8h16" stroke="#666" strokeWidth="3" />
      </svg>
    </button>
    <button className="flex w-[200px] items-center gap-[3px] rounded-b border-b-2 border-[#1651b0] bg-white pl-2.5 text-[#333]">
      <Icon name="studio" />
      Part Studio 1
    </button>
    <button className="mb-px ml-0.5 flex w-[200px] items-center gap-[3px] rounded-b bg-[#e8e8e8] pl-2.5 text-[#666]">
      <Icon name="assembly" />
      Assembly 1
    </button>
  </footer>
);

const App: React.FC = () => (
  <div className="flex h-screen flex-col overflow-hidden bg-white font-[Roboto,'Noto_Sans',sans-serif]">
    <Header />
    <div className="flex min-h-0 grow">
      <SideRail />
      <div className="flex min-w-0 grow flex-col">
        <Toolbar />
        <div className="flex min-h-0 grow">
          <FeaturePanel />
          <Canvas />
        </div>
        <TabBar />
      </div>
    </div>
  </div>
);

export default App;
